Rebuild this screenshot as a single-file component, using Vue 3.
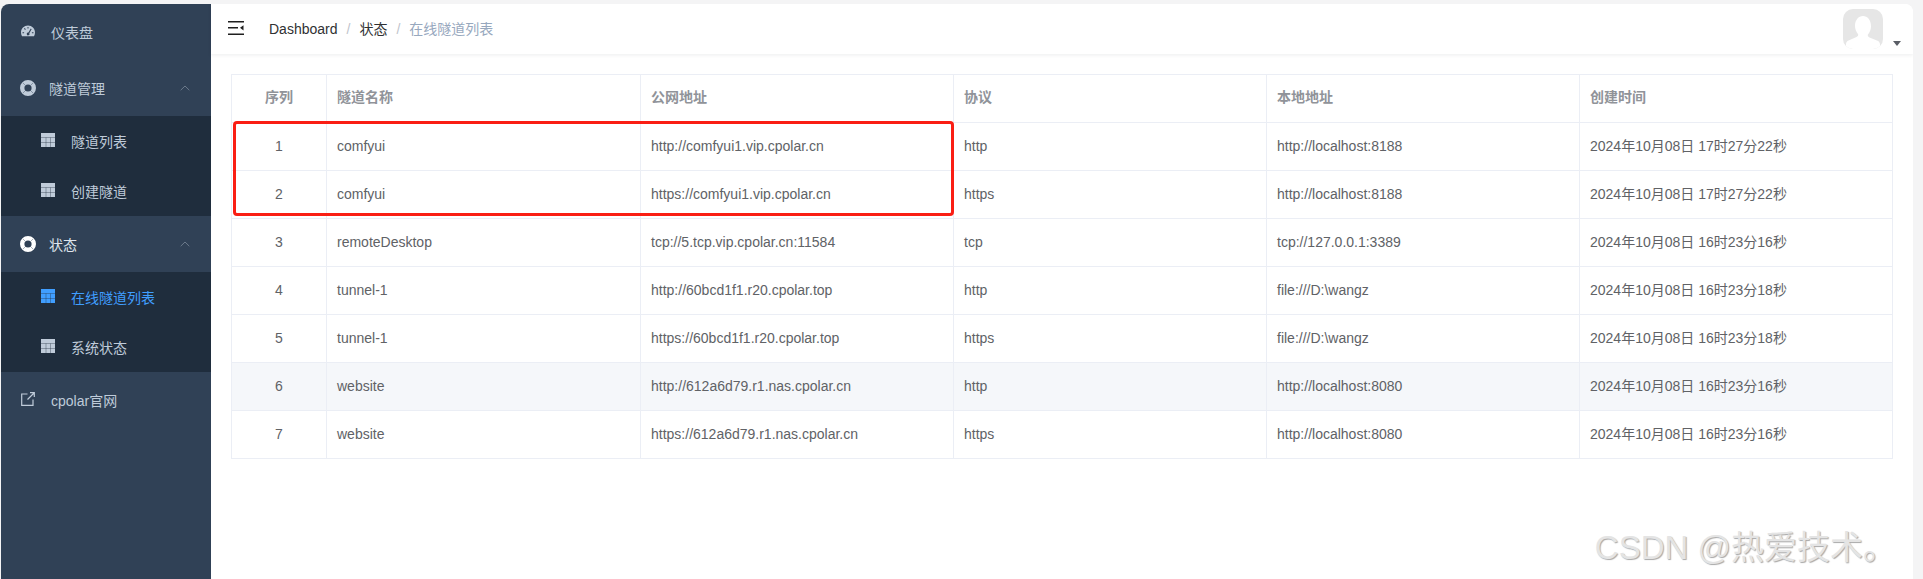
<script setup>
const rows = [
  [1, 'comfyui', 'http://comfyui1.vip.cpolar.cn', 'http', 'http://localhost:8188', '2024年10月08日 17时27分22秒'],
  [2, 'comfyui', 'https://comfyui1.vip.cpolar.cn', 'https', 'http://localhost:8188', '2024年10月08日 17时27分22秒'],
  [3, 'remoteDesktop', 'tcp://5.tcp.vip.cpolar.cn:11584', 'tcp', 'tcp://127.0.0.1:3389', '2024年10月08日 16时23分16秒'],
  [4, 'tunnel-1', 'http://60bcd1f1.r20.cpolar.top', 'http', 'file:///D:\\wangz', '2024年10月08日 16时23分18秒'],
  [5, 'tunnel-1', 'https://60bcd1f1.r20.cpolar.top', 'https', 'file:///D:\\wangz', '2024年10月08日 16时23分18秒'],
  [6, 'website', 'http://612a6d79.r1.nas.cpolar.cn', 'http', 'http://localhost:8080', '2024年10月08日 16时23分16秒'],
  [7, 'website', 'https://612a6d79.r1.nas.cpolar.cn', 'https', 'http://localhost:8080', '2024年10月08日 16时23分16秒'],
]
const heads = ['序列', '隧道名称', '公网地址', '协议', '本地地址', '创建时间']
</script>

<template>
  <div class="page">
    <div class="shell">
      <aside class="sidebar">
        <a class="item leaf">
          <svg class="ic gauge" viewBox="0 0 14 12"><path fill-rule="evenodd" d="M7 .5C3.100.5 0 3.500 0 7.400c0 1.500.4 2.800 1 3.900h12c.6-1.100 1-2.400 1-3.900C14 3.500 10.900.5 7 .5zM6.500 2h1v1.600h-1zM3 3.600l.8-.6 1 1.300-.8.600zM1.500 7.200h1.600v1H1.500zM10.900 7.200h1.600v1h-1.600zM9.800 3.600l.8.600-2.300 4a1.400 1.400 0 1 1-.9-.6z"/></svg>
          <span>仪表盘</span>
        </a>

        <div class="item group">
          <svg class="ic buoy" viewBox="0 0 16 16"><circle cx="8" cy="8" r="5.800" fill="none" stroke="currentColor" stroke-width="4.400"/><path d="M2.800 2.800l2.400 2.400M13.200 2.800l-2.400 2.400M2.800 13.200l2.400-2.400M13.200 13.200l-2.400-2.400" stroke="#304156" stroke-width=".6" stroke-opacity=".7"/></svg>
          <span>隧道管理</span>
          <svg class="chev" viewBox="0 0 10 6"><path d="M.7 5.200L5 1l4.300 4.200" fill="none" stroke="currentColor" stroke-width="1"/></svg>
        </div>
        <div class="sub">
          <a class="subitem">
            <svg class="grid" viewBox="0 0 14 14"><path d="M0 0h14v14H0z"/><path d="M0 4.500h14M5 4.500V14M9.500 4.500V14M0 9.500h14" stroke="#1f2d3d" stroke-width=".8" stroke-opacity=".45" fill="none"/></svg>
            <span>隧道列表</span>
          </a>
          <a class="subitem">
            <svg class="grid" viewBox="0 0 14 14"><path d="M0 0h14v14H0z"/><path d="M0 4.500h14M5 4.500V14M9.500 4.500V14M0 9.500h14" stroke="#1f2d3d" stroke-width=".8" stroke-opacity=".45" fill="none"/></svg>
            <span>创建隧道</span>
          </a>
        </div>

        <div class="item group open">
          <svg class="ic buoy" viewBox="0 0 16 16"><circle cx="8" cy="8" r="5.800" fill="none" stroke="currentColor" stroke-width="4.400"/><path d="M2.800 2.800l2.400 2.400M13.200 2.800l-2.400 2.400M2.800 13.200l2.400-2.400M13.200 13.200l-2.400-2.400" stroke="#304156" stroke-width=".6" stroke-opacity=".7"/></svg>
          <span>状态</span>
          <svg class="chev" viewBox="0 0 10 6"><path d="M.7 5.200L5 1l4.300 4.200" fill="none" stroke="currentColor" stroke-width="1"/></svg>
        </div>
        <div class="sub">
          <a class="subitem active">
            <svg class="grid" viewBox="0 0 14 14"><path d="M0 0h14v14H0z"/><path d="M0 4.500h14M5 4.500V14M9.500 4.500V14M0 9.500h14" stroke="#1f2d3d" stroke-width=".8" stroke-opacity=".45" fill="none"/></svg>
            <span>在线隧道列表</span>
          </a>
          <a class="subitem">
            <svg class="grid" viewBox="0 0 14 14"><path d="M0 0h14v14H0z"/><path d="M0 4.500h14M5 4.500V14M9.500 4.500V14M0 9.500h14" stroke="#1f2d3d" stroke-width=".8" stroke-opacity=".45" fill="none"/></svg>
            <span>系统状态</span>
          </a>
        </div>

        <a class="item leaf">
          <svg class="ic link" viewBox="0 0 14 14"><path d="M6.500 2H.7v11.300H12V7.500M6.500 7.500L13 1M9 .7h4.300V5" fill="none" stroke="currentColor" stroke-width="1.200"/></svg>
          <span>cpolar官网</span>
        </a>
      </aside>

      <main class="main">
        <header class="navbar">
          <svg class="hamb" viewBox="0 0 16 14"><path d="M0 .8h16M0 6.800h10M0 13.200h16" stroke="#1f1f1f" stroke-width="1.500" fill="none"/><path d="M15.500 4.200v5.200L12 6.800z" fill="#1f1f1f"/></svg>
          <nav class="crumb">
            <span class="c1">Dashboard</span><i>/</i><span class="c1">状态</span><i>/</i><span class="c2">在线隧道列表</span>
          </nav>
          <div class="user">
            <div class="avatar">
              <svg viewBox="0 0 40 40"><path d="M3 40v-5c0-1.600 1-3 2.500-3.600l8-3.400c1.400-.7 1.900-1.700 1.600-2.800-2-2.300-3.100-5.200-3.100-8.400C12 11 15.500 7 20 7s8 4 8 10.200c0 3.200-1.100 6.100-3.100 8.400-.3 1.100.2 2.100 1.600 2.800l8 3.400c1.500.6 2.500 2 2.500 3.600v5z" fill="#fff"/></svg>
            </div>
            <span class="caret"></span>
          </div>
        </header>

        <section class="content">
          <div class="tablewrap">
            <table>
              <colgroup>
                <col class="w0" /><col class="w1" /><col class="w2" /><col class="w2" /><col class="w2" /><col class="w2" />
              </colgroup>
              <thead>
                <tr><th v-for="(h, i) in heads" :key="h" :class="{ center: i === 0 }">{{ h }}</th></tr>
              </thead>
              <tbody>
                <tr v-for="r in rows" :key="r[0]" :class="{ hover: r[0] === 6 }">
                  <td v-for="(c, i) in r" :key="i" :class="{ center: i === 0 }">{{ c }}</td>
                </tr>
              </tbody>
            </table>
            <div class="redbox"></div>
          </div>
        </section>
        <div class="watermark">CSDN @热爱技术。</div>
      </main>
    </div>
  </div>
</template>

<style>
html, body { margin: 0; height: 100%; overflow: hidden; background: #f5f5f5; }
</style>

<style scoped>
.page {
  box-sizing: border-box;
  width: 1923px;
  height: 579px;
  padding: 4px 10px 0 1px;
  background: #f4f4f5;
  font-family: "Liberation Sans", "Noto Sans CJK SC", sans-serif;
  font-size: 14px;
  overflow: hidden;
}
.shell {
  display: flex;
  height: 100%;
  border-radius: 8px 8px 0 0;
  overflow: hidden;
  background: #fff;
}
.sidebar {
  width: 210px;
  flex: none;
  background: #304156;
  color: #bfcbd9;
}
.item {
  display: flex;
  align-items: center;
  height: 56px;
  position: relative;
  color: #bfcbd9;
}
.leaf { padding-left: 20px; }
.leaf .ic { width: 14px; margin-right: 16px; }
.gauge { height: 12px; fill: currentColor; margin-top: -2px; }
.link { height: 14px; margin-top: -2px; }
.group { padding-left: 19px; }
.group.open { color: #fff; }
.group.open span { color: #dfe5ec; }
.buoy { width: 16px; height: 16px; margin-right: 13px; }
.chev {
  position: absolute;
  right: 21px;
  top: 25px;
  width: 10px;
  height: 6px;
  color: #6c7a8b;
}
.sub { background: #1f2d3d; }
.subitem {
  display: flex;
  align-items: center;
  height: 50px;
  padding-left: 40px;
  color: #bfcbd9;
}
.subitem .grid {
  width: 14px;
  height: 14px;
  margin-right: 16px;
  margin-top: -2px;
  fill: currentColor;
}
.subitem.active { color: #409eff; }
.main {
  flex: 1;
  min-width: 0;
  position: relative;
  background: #fff;
}
.navbar {
  display: flex;
  align-items: center;
  height: 50px;
  box-shadow: 0 1px 4px rgba(0, 21, 41, 0.08);
  position: relative;
}
.hamb {
  width: 16px;
  height: 14px;
  margin-left: 17px;
  margin-top: -2px;
  flex: none;
}
.crumb {
  margin-left: 25px;
  margin-top: -2px;
  color: #303133;
}
.crumb i {
  font-style: normal;
  color: #c0c4cc;
  margin: 0 9px;
}
.c1 { color: #303133; }
.c2 { color: #97a8be; }
.user {
  margin-left: auto;
  margin-right: 30px;
  position: relative;
  height: 50px;
  width: 40px;
}
.avatar {
  position: absolute;
  top: 5px;
  left: 0;
  width: 40px;
  height: 40px;
  border-radius: 10px;
  background: #e6e6e6;
  overflow: hidden;
}
.avatar svg { display: block; width: 40px; height: 40px; }
.caret {
  position: absolute;
  left: 50px;
  top: 37px;
  width: 0;
  height: 0;
  border-left: 4px solid transparent;
  border-right: 4px solid transparent;
  border-top: 5px solid #5a5e66;
}
.content { padding: 20px; }
.tablewrap {
  position: relative;
  border-top: 1px solid #ebeef5;
  border-left: 1px solid #ebeef5;
}
table {
  border-collapse: separate;
  border-spacing: 0;
  table-layout: fixed;
  width: 1661px;
}
.w0 { width: 95px; }
.w1 { width: 314px; }
.w2 { width: 313px; }
th, td {
  box-sizing: border-box;
  height: 48px;
  padding: 0 10px 2px;
  line-height: 20px;
  border-right: 1px solid #ebeef5;
  border-bottom: 1px solid #ebeef5;
  text-align: left;
  white-space: nowrap;
}
th {
  color: #909399;
  font-weight: 700;
  padding-bottom: 4px;
}
td { color: #606266; }
.center { text-align: center; }
.hover td { background: #f5f7fa; }
.redbox {
  position: absolute;
  left: 1px;
  top: 46px;
  width: 721px;
  height: 95px;
  box-sizing: border-box;
  border: 3px solid #fa1e14;
  border-radius: 4px;
  pointer-events: none;
}
.watermark {
  position: absolute;
  right: 17px;
  bottom: 11px;
  font-size: 33px;
  line-height: 40px;
  color: #e4e4e4;
  text-shadow: 1px 1px 1px #a8a8a8;
  white-space: nowrap;
}
</style>
